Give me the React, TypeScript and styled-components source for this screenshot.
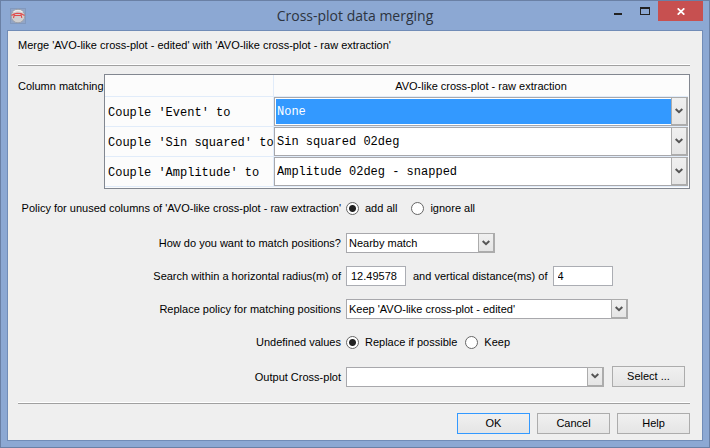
import React from "react";
import styled, { createGlobalStyle, css } from "styled-components";

const GlobalStyle = createGlobalStyle`
  *, *::before, *::after { box-sizing: border-box; }
  body {
    margin: 0;
    font: 11px/16px "Liberation Sans", Arial, sans-serif;
    color: #000;
  }
  button, input, select { font: inherit; color: inherit; margin: 0; }
`;

const Window = styled.div`
  display: flex;
  flex-direction: column;
  min-height: 100vh;
  padding: 0 6px 6px;
  background: #8ca8d3;
  border: 1px solid #6a80a5;
`;

const TitleBar = styled.header`
  display: grid;
  grid-template-columns: 103px 1fr 103px;
  align-items: center;
  height: 29px;
`;

const AppIcon = styled.svg`
  width: 16px;
  height: 16px;
  margin-left: 3px;
`;

const Title = styled.h1`
  margin: 0;
  font: 400 14px/20px "Open Sans", "Noto Sans", sans-serif;
  color: #2c3440;
  text-align: center;
`;

const WindowButtons = styled.div`
  display: flex;
  align-self: start;
  justify-content: flex-end;
`;

const WindowButton = styled.button<{ $close?: boolean }>`
  width: ${(p) => (p.$close ? 45 : 27)}px;
  height: 20px;
  padding: 0;
  border: 0;
  background: ${(p) => (p.$close ? "#c75050" : "transparent")};
  svg { display: block; margin: 0 auto; }
`;

const Client = styled.main`
  flex: 1;
  padding: 6px 12px 6px 10px;
  background: #efefef;
  border: 1px solid #718cb7;
`;

const Message = styled.p`
  margin: 0;
`;

const Separator = styled.hr`
  height: 2px;
  margin: 11px 0 8px;
  border: 0;
  border-top: 1px solid #fff;
  border-bottom: 1px solid #a0a0a0;
`;

const Matching = styled.section`
  display: flex;
`;

const MatchingLabel = styled.span`
  flex: 0 0 86px;
  padding-top: 4px;
  white-space: nowrap;
`;

const TableFrame = styled.div`
  flex: 1;
  padding: 0 1px 1px 0;
  background: #fcfcfc;
  border: 1px solid #828790;
`;

const MatchTable = styled.table`
  width: 100%;
  table-layout: fixed;
  border-collapse: separate;
  border-spacing: 0;
  th, td {
    padding: 0;
    border-bottom: 1px solid #e1ecfa;
    font-weight: 400;
  }
  tr > :first-child {
    width: 169px;
    border-right: 1px solid #e1ecfa;
  }
  thead th { height: 22px; }
  tbody th {
    height: 30px;
    padding: 2px 0 0 3px;
    font: 12px/16px "Liberation Mono", "Courier New", monospace;
    text-align: left;
    white-space: nowrap;
  }
`;

const SelectBox = styled.span<{ $width?: number; $cell?: boolean }>`
  display: grid;
  grid-template-columns: 1fr 17px;
  width: ${(p) => (p.$width ? `${p.$width}px` : "100%")};
  height: ${(p) => (p.$cell ? 29 : 20)}px;
`;

const NativeSelect = styled.select<{ $cell?: boolean; $active?: boolean }>`
  grid-area: 1 / 1 / 2 / 3;
  min-width: 0;
  height: 100%;
  padding: 0 18px 0 2px;
  appearance: none;
  outline: 0;
  border: 1px solid #a8a8ac;
  border-radius: 0;
  background: #fff;
  ${(p) =>
    p.$cell &&
    css`
      font: 12px/16px "Liberation Mono", "Courier New", monospace;
    `}
  ${(p) =>
    p.$active &&
    css`
      background: #3399ff;
      color: #fff;
      box-shadow: inset 0 0 0 1px #fff;
    `}
`;

const Arrow = styled.span`
  grid-area: 1 / 2 / 2 / 3;
  z-index: 1;
  display: flex;
  align-items: center;
  justify-content: center;
  border: 1px solid #acacac;
  border-width: 1px 2px 2px 1px;
  background: linear-gradient(#f0f0f0, #e5e5e5);
  pointer-events: none;
`;

const Form = styled.form`
  display: grid;
  grid-template-columns: 323px 1fr;
  align-items: center;
  gap: 13px 5px;
  padding: 7px 0 3px;
`;

const FormLabel = styled.label`
  justify-self: end;
  white-space: nowrap;
`;

const Field = styled.div<{ $gap?: number; $height?: number }>`
  display: flex;
  align-items: center;
  gap: ${(p) => p.$gap ?? 8}px;
  min-height: ${(p) => p.$height ?? 20}px;
  white-space: nowrap;
`;

const InlineLabel = styled.label`
  padding-left: 2px;
`;

const Option = styled.label`
  display: flex;
  align-items: center;
  gap: 6px;
`;

const Radio = styled.input`
  width: 13px;
  height: 13px;
  appearance: none;
  border: 1px solid #666;
  border-radius: 50%;
  background: #fff;
  &:checked { background: radial-gradient(circle, #222 0 3px, #fff 4px); }
`;

const NumberBox = styled.input`
  width: 60px;
  height: 20px;
  padding: 0 4px;
  outline: 0;
  border: 1px solid #abadb3;
  background: #fff;
`;

const PushButton = styled.button<{ $primary?: boolean }>`
  width: 73px;
  height: 21px;
  padding: 0 0 1px;
  border: 1px solid ${(p) => (p.$primary ? "#3399ff" : "#acacac")};
  background: linear-gradient(#f0f0f0, #e5e5e5);
`;

const Actions = styled.footer`
  display: flex;
  justify-content: flex-end;
  gap: 7px;
  padding-top: 1px;
`;

interface ComboProps {
  id?: string;
  label: string;
  value: string;
  width?: number;
  cell?: boolean;
  active?: boolean;
}

function Combo({ id, label, value, width, cell, active }: ComboProps) {
  return (
    <SelectBox $width={width} $cell={cell}>
      <NativeSelect id={id} aria-label={label} $cell={cell} $active={active}>
        <option>{value}</option>
      </NativeSelect>
      <Arrow>
        <svg width="8" height="6" viewBox="0 0 8 6" aria-hidden="true">
          <path d="M.7 1 4 4.2 7.3 1" fill="none" stroke="#555" strokeWidth="2" />
        </svg>
      </Arrow>
    </SelectBox>
  );
}

const columns = [
  { name: "Event", value: "None", active: true },
  { name: "Sin squared", value: "Sin squared 02deg" },
  { name: "Amplitude", value: "Amplitude 02deg - snapped" },
];

export default function App() {
  return (
    <>
      <GlobalStyle />
      <Window>
        <TitleBar>
          <AppIcon viewBox="0 0 16 16" aria-hidden="true">
            <rect x=".5" y=".5" width="15" height="15" fill="#92a5c6" stroke="#8299be" />
            <circle cx="8" cy="8" r="6.8" fill="#d0cfd0" stroke="#a0a3aa" />
            <path d="M3.5 4C6 2.2 10 2.2 12.5 4" fill="none" stroke="#eeeeee" strokeWidth="1.2" />
            <path d="M1.5 7.5 4 6l3-.8 4 .3 3.5 2M4.5 6 3.5 10M4.5 7.5H11M10.8 5.5l1 4.5" fill="none" stroke="#e24a4a" strokeWidth="1.1" />
          </AppIcon>
          <Title>Cross-plot data merging</Title>
          <WindowButtons>
            <WindowButton type="button" aria-label="Minimize">
              <svg width="8" height="8" aria-hidden="true">
                <path d="M0 6h8v2H0z" fill="#222" />
              </svg>
            </WindowButton>
            <WindowButton type="button" aria-label="Maximize">
              <svg width="10" height="8" aria-hidden="true">
                <path d="M0 0h10v8H0zM1 2v5h8V2z" fill="#222" fillRule="evenodd" />
              </svg>
            </WindowButton>
            <WindowButton type="button" $close aria-label="Close">
              <svg width="8" height="7" aria-hidden="true">
                <path d="m.7.3 6.6 6.4m0-6.4L.7 6.7" stroke="#fff" strokeWidth="1.7" />
              </svg>
            </WindowButton>
          </WindowButtons>
        </TitleBar>
        <Client>
          <Message>Merge 'AVO-like cross-plot - edited' with 'AVO-like cross-plot - raw extraction'</Message>
          <Separator />
          <Matching>
            <MatchingLabel>Column matching</MatchingLabel>
            <TableFrame>
              <MatchTable aria-label="Column matching">
                <thead>
                  <tr>
                    <td />
                    <th scope="col">AVO-like cross-plot - raw extraction</th>
                  </tr>
                </thead>
                <tbody>
                  {columns.map((c) => (
                    <tr key={c.name}>
                      <th scope="row">Couple '{c.name}' to</th>
                      <td>
                        <Combo cell label={`Couple '${c.name}' to`} value={c.value} active={c.active} />
                      </td>
                    </tr>
                  ))}
                </tbody>
              </MatchTable>
            </TableFrame>
          </Matching>
          <Form>
            <FormLabel as="span" id="policy">Policy for unused columns of 'AVO-like cross-plot - raw extraction'</FormLabel>
            <Field $gap={14} $height={24} role="radiogroup" aria-labelledby="policy">
              <Option><Radio type="radio" name="policy" defaultChecked />add all</Option>
              <Option><Radio type="radio" name="policy" />ignore all</Option>
            </Field>
            <FormLabel htmlFor="match">How do you want to match positions?</FormLabel>
            <Field><Combo id="match" label="How do you want to match positions?" value="Nearby match" width={149} /></Field>
            <FormLabel htmlFor="radius">Search within a horizontal radius(m) of</FormLabel>
            <Field $gap={5}>
              <NumberBox id="radius" defaultValue="12.49578" />
              <InlineLabel htmlFor="distance">and vertical distance(ms) of</InlineLabel>
              <NumberBox id="distance" defaultValue="4" />
            </Field>
            <FormLabel htmlFor="replace">Replace policy for matching positions</FormLabel>
            <Field><Combo id="replace" label="Replace policy for matching positions" value="Keep 'AVO-like cross-plot - edited'" width={282} /></Field>
            <FormLabel as="span" id="undefined">Undefined values</FormLabel>
            <Field role="radiogroup" aria-labelledby="undefined">
              <Option><Radio type="radio" name="undefined" defaultChecked />Replace if possible</Option>
              <Option><Radio type="radio" name="undefined" />Keep</Option>
            </Field>
            <FormLabel htmlFor="output">Output Cross-plot</FormLabel>
            <Field $height={23}>
              <Combo id="output" label="Output Cross-plot" value="" width={258} />
              <PushButton type="button">Select ...</PushButton>
            </Field>
          </Form>
          <Separator />
          <Actions>
            <PushButton $primary type="button">OK</PushButton>
            <PushButton type="button">Cancel</PushButton>
            <PushButton type="button">Help</PushButton>
          </Actions>
        </Client>
      </Window>
    </>
  );
}
